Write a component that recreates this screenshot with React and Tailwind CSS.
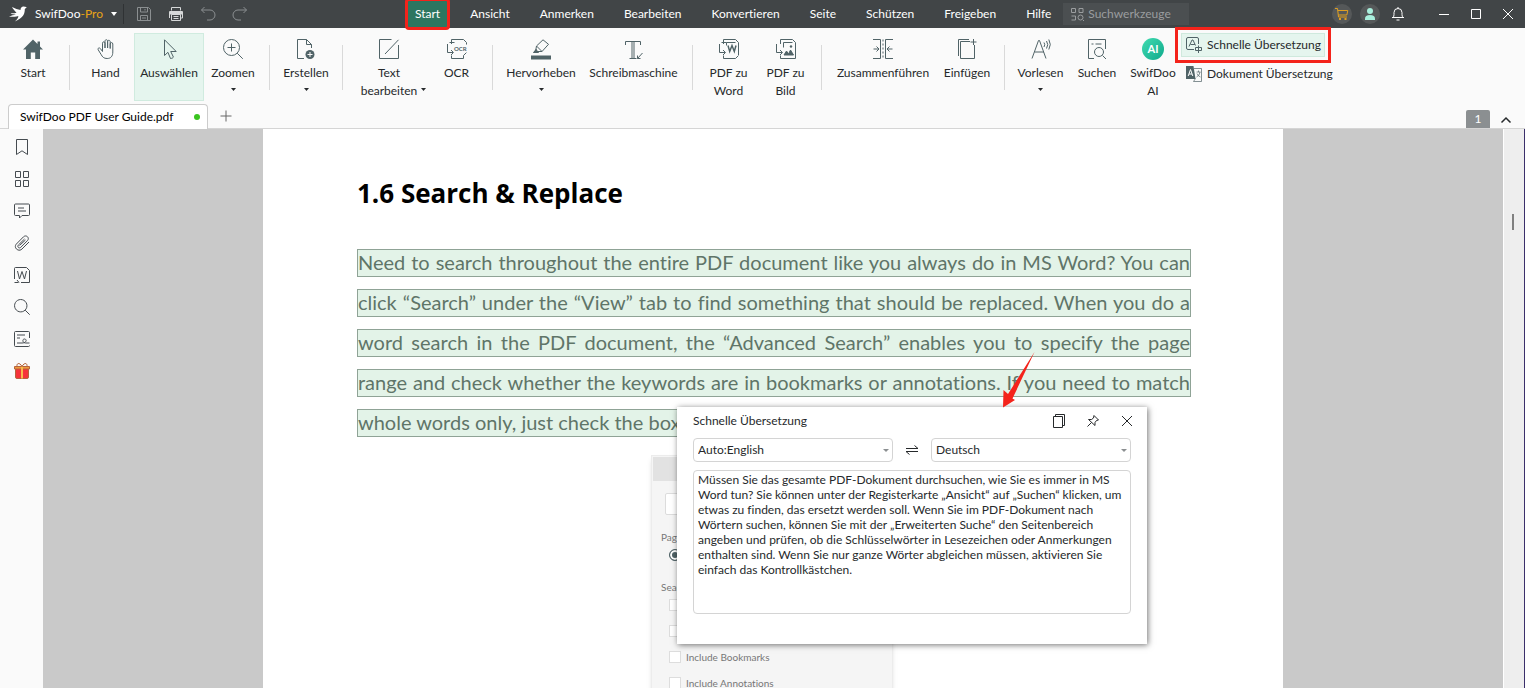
import { useState } from 'react';

const menuItems = ['Start', 'Ansicht', 'Anmerken', 'Bearbeiten', 'Konvertieren', 'Seite', 'Schützen', 'Freigeben', 'Hilfe'];

// Grupos de la cinta, separados por una línea vertical
const ribbonGroups = [
    [{ icon: 'home', label: 'Start', width: 'w-[58px]' }],
    [
        { icon: 'hand', label: 'Hand', width: 'w-[57px]' },
        { icon: 'cursor', label: 'Auswählen', width: 'w-[70px]', active: true },
        { icon: 'zoom', label: 'Zoomen', width: 'w-[58px]', caret: true }
    ],
    [{ icon: 'create', label: 'Erstellen', width: 'w-[58px]', caret: true }],
    [
        { icon: 'edit', label: 'Text', second: 'bearbeiten', width: 'w-[78px]', caret: true },
        { icon: 'ocr', label: 'OCR', width: 'w-[57px]' }
    ],
    [
        { icon: 'highlight', label: 'Hervorheben', width: 'w-[82px]', caret: true },
        { icon: 'type', label: 'Schreibmaschine', width: 'w-[103px]' }
    ],
    [
        { icon: 'word', label: 'PDF zu', second: 'Word', width: 'w-[57px]' },
        { icon: 'image', label: 'PDF zu', second: 'Bild', width: 'w-[57px]' }
    ],
    [
        { icon: 'merge', label: 'Zusammenführen', width: 'w-[108px]' },
        { icon: 'insert', label: 'Einfügen', width: 'w-[60px]' }
    ],
    [
        { icon: 'read', label: 'Vorlesen', width: 'w-[57px]', caret: true },
        { icon: 'search', label: 'Suchen', width: 'w-[56px]' },
        { icon: 'ai', label: 'SwifDoo', second: 'AI', width: 'w-[56px]' }
    ]
];

const ribbonIcons = {
    home: (
        <path d="M10 .5 0 10.500h3V20h4.800v-6.500h4.400V20H17v-9.500h3L17 7.500V2.500h-2.500v2.500z" fill="currentColor" stroke="none" />
    ),
    hand: (
        <path d="M5.500 12.500V4.200c0-1.900 2.500-1.900 2.500 0V9V2.200c0-2 2.600-2 2.600 0V9V2.800c0-2 2.600-2 2.600 0V9.500V5c0-1.900 2.600-1.900 2.600 0v8c0 4-1.800 6.500-5.600 6.500c-3.500 0-4.800-1.500-6.200-4.200L1.200 10.800c-.9-1.600 1.200-2.600 2.200-1.200l2.100 2.900" transform="translate(1 0)" />
    ),
    cursor: <path d="M5.500.8v15.700l3.400-3.200 2.600 6.200c1.800-.1 2.600-.7 2.900-1.500l-2.700-5.500h5.500z" />,
    zoom: (
        <>
            <circle cx="8.500" cy="8.500" r="8" />
            <path d="M14.200 14.200l5.600 5.600M4.500 8.500h8M8.500 4.500v8" />
        </>
    ),
    create: (
        <>
            <path d="M8 19.500H1.500V.5h9l5 5V9M10.500.5v5h5" />
            <circle cx="14" cy="15.500" r="4.500" fill="currentColor" stroke="none" />
            <path d="M11.500 15.500h5M14 13v5" stroke="#fafafa" />
        </>
    ),
    edit: <path d="M12.500.5H.5v19h19V6M6 15L19.500.8" />,
    ocr: (
        <>
            <path d="M4.500 5V.5h12l3 3v10l-3 3M.5 5v8.500H6M4 11l2.500 2.500L4 16M4.500 16.500v3h12v-3M7.500 3.500H2.500" />
            <rect x="6.500" y="5.500" width="14" height="8" rx="1" fill="#fafafa" stroke="none" />
            <text x="7" y="12" fontSize="6" fontWeight="700" fill="currentColor" stroke="none">OCR</text>
        </>
    ),
    highlight: (
        <>
            <path d="M4.500 12.500l1-5.500L12 .8l5.500 4.500-6.500 7.200zM5.500 7l5.500 5.500M3 13.500l2.500-3" />
            <path d="M2.500 13.500h5l-2.500-3z" fill="currentColor" />
            <path d="M0 16.500h20v4H0z" fill="currentColor" stroke="none" />
        </>
    ),
    type: <path d="M1.500 6V2.500h15V6M8 2.500v17M10 2.500v17M5.500 19.500h7M13.500 19.500l5-5.500M13.500 16.500v3h3" />,
    word: (
        <>
            <path d="M4.500 5V.5h12l3 3V16M.5 5v8.500H6M4 11l2.500 2.500L4 16M4.500 16.500v3h12l3-3M7.500 3.500H2.500M16.500 3.500h-9v3" />
            <path d="M9 6.500l1.700 6 2.300-6 2.300 6 1.700-6" strokeWidth="1.500" />
        </>
    ),
    image: (
        <>
            <path d="M4.500 5V.5h12l3 3V19.500h-15v-3M.5 5v8.500H6M4 11l2.500 2.500L4 16M16.500 3.500h-9v5" />
            <path d="M8 16l2.500-4 2 3 2-4 3 5z" fill="currentColor" />
            <circle cx="15" cy="7.500" r="1.200" fill="currentColor" stroke="none" />
        </>
    ),
    merge: (
        <>
            <path d="M0 .5h7.500v19H0M20 .5h-7.500v19H20M.5 10h5M3.500 7.500L6 10l-2.500 2.500M19.500 10h-5M16.500 7.500L14 10l2.500 2.500" />
            <path d="M10 .5v19" strokeDasharray="2 2" />
        </>
    ),
    insert: <path d="M13 2.500H3.500v17h14V6M1.500 17V.5h10.500M16.500 0v6M13.500 3h6" />,
    read: <path d="M1 19.500L7.500 1.500h1l6.500 18M3.500 13h9.500M13 3.500q1.500 2 0 4.500M15.500 2q2.500 3.500 0 7.500M17.800.5q3 5 0 10" />,
    search: (
        <>
            <path d="M7 19.500H1.500V.5h17V10M4.500 5h2M8.500 5h6" />
            <circle cx="12" cy="13" r="4.500" />
            <path d="M15.500 16.500l3.500 3.500" />
        </>
    )
};

const sideIcons = [
    { name: 'Lesezeichen', art: <path d="M2.500.5h11v15L8 11.800 2.500 15.500z" /> },
    { name: 'Miniaturen', art: <path d="M1.500.5h5v6h-5zM9.500.5h5v6h-5zM1.500 9.500h5v6h-5zM9.500 9.500h5v6h-5z" /> },
    { name: 'Kommentare', art: <path d="M1.500 1h13q1 0 1 1v9.500q0 1-1 1H8L5.500 15v-2.500h-4q-1 0-1-1V2q0-1 1-1zM4 5h6M4 8h8" /> },
    { name: 'Anhänge', art: <path d="M15 7l-7 7c-3.500 3.500-9-1.500-5.600-5L9.500 1.800c2.700-2.500 6.500 1 4 3.800l-6.800 6.800c-1.700 1.500-3.800-.5-2.400-2.300L10.500 4M5.500 10.500L11.500 5" /> },
    { name: 'Word', art: <path d="M.5 12V1.500Q.5.500 1.500.5h11l3 3v12H7M4.500 15.500h-4M3 13l2 2.500M3.500 4l2 8L8 4.500l2.500 7.500 2-8" /> },
    { name: 'Suche', art: <path d="M6.700.5a6.200 6.200 0 1 0 .1 0M11.200 11.200l4.500 4.500" /> },
    { name: 'Signatur', art: <path d="M15.500 7V1.500q0-1-1-1h-13q-1 0-1 1v13q0 1 1 1h13q1 0 1-1M3 4h8M3 7h3M3 12h5c5 0 5-4 2.500-4s-2 4 1 4h4" /> }
];

const pdfLines = [
    'Need to search throughout the entire PDF document like you always do in MS Word? You can',
    'click “Search” under the “View” tab to find something that should be replaced. When you do a',
    'word search in the PDF document, the “Advanced Search” enables you to specify the page',
    'range and check whether the keywords are in bookmarks or annotations. If you need to match'
];

const translation = `Müssen Sie das gesamte PDF-Dokument durchsuchen, wie Sie es immer in MS
Word tun? Sie können unter der Registerkarte „Ansicht“ auf „Suchen“ klicken, um
etwas zu finden, das ersetzt werden soll. Wenn Sie im PDF-Dokument nach
Wörtern suchen, können Sie mit der „Erweiterten Suche“ den Seitenbereich
angeben und prüfen, ob die Schlüsselwörter in Lesezeichen oder Anmerkungen
enthalten sind. Wenn Sie nur ganze Wörter abgleichen müssen, aktivieren Sie
einfach das Kontrollkästchen.`;

function Icon({ children, box = '0 0 20 20', className = 'size-5' }) {
    return (
        <svg viewBox={box} className={`shrink-0 overflow-visible ${className}`} fill="none" stroke="currentColor" strokeWidth="1" aria-hidden="true">
            {children}
        </svg>
    );
}

function Caret({ className = 'h-[3px] w-[5px]' }) {
    return (
        <svg viewBox="0 0 6 3" preserveAspectRatio="none" className={`shrink-0 ${className}`} fill="currentColor" aria-hidden="true">
            <path d="M0 0h6L3 3z" />
        </svg>
    );
}

function TitleBar() {
    return (
        <header className="flex h-7 items-center bg-[#414547] text-white">
            <div className="flex w-[407px] shrink-0 items-center">
                <Icon box="0 0 18 16" className="ml-[9px] h-4 w-[18px]">
                    <path
                        d="M17.800 1.200L15.800 3c0 4.500-1 8.500-10 12.500c2.500-2 3.700-4 3.500-5.500C6 11.500 3 10 0 11c2-1.800 5-2 7-2.300-2-.4-4-.2-5.500-1.500 2 .3 4.500 0 6-.5C5.500 4.500 4 3 3 1c3 1.500 6 2.500 8.500 3C11.500 1.500 13 .2 15 .5c1 .1 1.500.6 2.800.7z"
                        fill="white"
                        stroke="none"
                    />
                </Icon>
                <span className="ml-2 w-[68px] whitespace-nowrap">
                    SwifDoo<span className="text-[#e8a317]">-Pro</span>
                </span>
                <Caret className="ml-2 h-1 w-[6px]" />
                <span className="ml-[6px] h-5 w-px bg-[#2f3234]" />
                <div className="ml-3 flex items-center gap-4">
                    <button aria-label="Speichern" className="text-[#8b8f91]">
                        <Icon box="0 0 16 16" className="size-4">
                            <path d="M1.500 1.500h11l2 2v11h-13zM4.500 1.500V6h7V1.500M4.500 14.500V9.500h7v5M9 3v1.500M6 12h4" />
                        </Icon>
                    </button>
                    <button aria-label="Drucken" className="text-[#d6d8d9]">
                        <Icon box="0 0 16 16" className="size-4">
                            <path d="M3.500 4.500v-3h9v3M1.500 12V5.500h13V12h-2M3.500 8.500h9v6h-9zM5.500 10.500h5M5.500 12.500h5" />
                            <path d="M2 6h12v2H2z" fill="currentColor" />
                        </Icon>
                    </button>
                    <button aria-label="Rückgängig" className="text-[#8b8f91]">
                        <Icon box="0 0 16 16" className="size-4">
                            <path d="M4.500 1L1.500 4l3 3M1.500 4H10a5 5 0 0 1 0 10H7" />
                        </Icon>
                    </button>
                    <button aria-label="Wiederholen" className="text-[#8b8f91]">
                        <Icon box="0 0 16 16" className="size-4">
                            <path d="M11.500 1l3 3-3 3M14.500 4H6a5 5 0 0 0 0 10h3" />
                        </Icon>
                    </button>
                </div>
            </div>

            <nav className="flex h-full shrink-0 gap-[14px]">
                {menuItems.map((item, i) => (
                    <button
                        key={item}
                        className={
                            i === 0
                                ? 'h-7 rounded-xs bg-[#2d7660] px-2 outline-3 -outline-offset-1 outline-[#f4231b]'
                                : 'h-7 px-2'
                        }
                    >
                        {item}
                    </button>
                ))}
            </nav>

            <label className="ml-1 flex h-[22px] w-[126px] shrink-0 items-center gap-1 bg-[#4b4f51] pl-2 text-[#9a9d9f]">
                <Icon box="0 0 13 13" className="size-[13px]">
                    <path d="M.5.5h4v4h-4zM8 .5h4v4H8zM.5 8h4v4h-4M12 12l1 1" />
                    <circle cx="9.500" cy="9.500" r="2.500" />
                </Icon>
                <input aria-label="Suchwerkzeuge" placeholder="Suchwerkzeuge" className="w-24 bg-transparent outline-none placeholder:text-[#9a9d9f]" />
            </label>

            <div className="ml-auto flex items-center gap-2 pr-[5px]">
                <button aria-label="Warenkorb" className="flex size-5 items-center justify-center rounded-full bg-[#555859] text-[#e0a020]">
                    <Icon box="0 0 14 14" className="size-[14px]">
                        <path d="M0 1.500h2.500l1 8.500h8.500M2.800 3.500h10l-1 4.500h-8.500" />
                        <path d="M4 11h2v2H4zM9.500 11h2v2h-2z" fill="currentColor" stroke="none" />
                    </Icon>
                </button>
                <button aria-label="Konto" className="flex size-5 items-center justify-center rounded-full bg-[#555859] text-[#a9efdc]">
                    <Icon box="0 0 12 12" className="size-3">
                        <circle cx="6" cy="3" r="3" fill="currentColor" stroke="none" />
                        <path d="M1 12v-1.500Q1 7 6 7t5 3.500V12z" fill="currentColor" stroke="none" />
                    </Icon>
                </button>
                <button aria-label="Benachrichtigungen" className="flex size-5 items-center justify-center">
                    <Icon box="0 0 12 14" className="h-[14px] w-3">
                        <path d="M1 10.500q1-1 1-3V5.500a4 4 0 0 1 8 0v2q0 2 1 3zM0 10.500h12M4.500 13h3M6 0v1.500" />
                    </Icon>
                </button>
                <button aria-label="Minimieren" className="ml-4 flex w-6 justify-center">
                    <Icon box="0 0 10 10" className="size-[10px]"><path d="M0 5.500h10" /></Icon>
                </button>
                <button aria-label="Maximieren" className="flex w-6 justify-center">
                    <Icon box="0 0 10 10" className="size-[10px]"><path d="M.5.5h9v9h-9z" /></Icon>
                </button>
                <button aria-label="Schließen" className="flex w-6 justify-center">
                    <Icon box="0 0 10 10" className="size-[10px]"><path d="M0 0l10 10M10 0L0 10" /></Icon>
                </button>
            </div>
        </header>
    );
}

function RibbonButton({ icon, label, second, width, caret, active }) {
    return (
        <button
            className={`flex h-[68px] shrink-0 flex-col items-center border pt-1 leading-[18px] whitespace-nowrap ${width} ${active ? 'border-[#d0ebdf] bg-[#e5f5ee]' : 'border-transparent'}`}
        >
            {icon === 'ai' ? (
                <span className="flex size-[22px] items-center justify-center rounded-full bg-linear-to-br from-[#3fdcb0] to-[#08a98c] text-[11px] font-bold text-white">AI</span>
            ) : (
                <span className="flex size-[22px] items-center justify-center text-[#506367]">
                    <Icon>{ribbonIcons[icon]}</Icon>
                </span>
            )}
            <span className="mt-1">{label}</span>
            {second && (
                <span className="relative">
                    {second}
                    {caret && <Caret className="absolute top-1.5 left-full ml-1 h-[3px] w-[5px]" />}
                </span>
            )}
            {caret && !second && <Caret className="mt-1.5 h-[3px] w-[5px]" />}
        </button>
    );
}

function Ribbon() {
    return (
        <div className="flex h-[76px] items-start pt-[5px] pl-1">
            {ribbonGroups.map((group, i) => (
                <div key={i} className="flex shrink-0">
                    {i > 0 && <span className="mx-[7px] mt-3 h-[45px] w-px bg-[#d9d9d9]" />}
                    {group.map((item) => (
                        <RibbonButton key={item.icon} {...item} />
                    ))}
                </div>
            ))}
            <div className="flex shrink-0 flex-col gap-[5px]">
                <button className="flex h-6 w-[144px] items-center gap-[5px] border border-[#cfe9dd] bg-[#e5f5ee] pl-1 whitespace-nowrap outline-3 outline-offset-3 outline-[#f4231b]">
                    <Icon box="0 0 16 16" className="size-4 text-[#506367]">
                        <path d="M8 12.500H2Q.5 12.500.5 11V2Q.5.500 2 .5h9q1.500 0 1.500 1.500v5M3 9.500L6 3h1l2.500 5.500M4.500 7.500h4.500M12.500 8.500v7.500M9.500 10.500h6v3h-6z" />
                    </Icon>
                    Schnelle Übersetzung
                </button>
                <button className="flex h-6 items-center gap-[5px] pl-[5px] whitespace-nowrap">
                    <Icon box="0 0 16 16" className="size-4 text-[#506367]">
                        <path d="M8 2.500h7.500v13H7.500l2-3M10.500 6h4M12.500 4.500V6M10.500 11q3.500-2 3.500-5M11 7.500q1 2.500 3.500 3.500" strokeOpacity=".7" />
                        <path d="M0 0h7.500l2 13H0z" fill="currentColor" stroke="none" />
                        <path d="M2.200 10L4.500 3.500 6.800 10M3 8h3" stroke="white" />
                    </Icon>
                    Dokument Übersetzung
                </button>
            </div>
        </div>
    );
}

function TabRow() {
    return (
        <div className="flex h-[25px] items-end border-b border-[#d5d5d5] pl-2">
            <div className="-mb-px flex h-[25px] w-[200px] items-center justify-between rounded-t-[4px] border border-b-0 border-[#cccccc] bg-white pr-[7px] pl-[11px] text-black">
                SwifDoo PDF User Guide.pdf
                <span className="size-[6px] rounded-full bg-[#3ac51f]" />
            </div>
            <button aria-label="Neuer Tab" className="flex h-6 w-9 items-center justify-center text-[#666666]">
                <Icon box="0 0 12 12" className="size-3"><path d="M6 .5v11M.5 6h11" /></Icon>
            </button>
            <div className="ml-auto flex items-end gap-2 pr-[11px]">
                <span className="flex h-[18px] w-6 items-center justify-center rounded-t-xs bg-[#8b8f91] text-white">1</span>
                <button aria-label="Menüband einklappen" className="flex size-4 items-center justify-center">
                    <Icon box="0 0 10 6" className="h-[6px] w-[10px]"><path d="M.5 5.500L5 1l4.500 4.500" strokeWidth="1.500" /></Icon>
                </button>
            </div>
        </div>
    );
}

function SideBar() {
    return (
        <aside className="flex w-[43px] shrink-0 flex-col items-end gap-4 bg-[#fafafa] pt-[10px] pr-[13px] text-[#454b50]">
            {sideIcons.map((item) => (
                <button key={item.name} aria-label={item.name} className="size-4">
                    <Icon box="0 0 16 16" className="size-4">{item.art}</Icon>
                </button>
            ))}
            <button aria-label="Geschenk" className="size-4">
                <Icon box="0 0 16 16" className="size-4">
                    <path d="M1.500 5.500h13V14q0 1.500-1.500 1.500H3q-1.500 0-1.500-1.500z" fill="#f5333a" stroke="#b5643c" />
                    <path d="M.5 3.500h15v2.500H.5z" fill="#f0993e" stroke="#b5643c" />
                    <path d="M7 3.500h2v12H7z" fill="#f7b84b" stroke="none" />
                    <path d="M8 3.500C6-.5 2.500-.5 3 3.500M8 3.500c2-4 5.500-4 5 0" stroke="#b5643c" />
                </Icon>
            </button>
        </aside>
    );
}

// Ventana de búsqueda que aparece dentro del documento PDF
function FigureDialog() {
    return (
        <div className="ml-[294px] w-[242px] border border-[#ececec] bg-[#f5f5f5] p-px pb-4 text-[10px] leading-4 text-[#777777] shadow-md">
            <div className="h-6 bg-[#e2e2e2]" />
            <div className="mt-3 ml-3 h-[22px] w-52 rounded-xs border border-[#dcdcdc] bg-white" />
            <p className="mt-[14px] pl-2">Page</p>
            <input type="radio" name="range" aria-label="Page" defaultChecked className="mt-1 ml-4 block size-3 appearance-none rounded-full border border-[#506367] bg-[#506367] shadow-[inset_0_0_0_2px_white]" />
            <p className="mt-[18px] pl-2">Search</p>
            <div className="mt-0.5 flex flex-col gap-[10px] pl-4">
                {['', '', 'Include Bookmarks', 'Include Annotations'].map((label, i) => (
                    <label key={i} className="flex h-4 items-center gap-[5px]">
                        <input type="checkbox" aria-label={label || 'Option'} className="size-3 appearance-none border border-[#dddddd] bg-white" />
                        {label}
                    </label>
                ))}
            </div>
        </div>
    );
}

function LanguageSelect({ label, value, options }) {
    const [language, setLanguage] = useState(value);

    return (
        <div className="relative w-[200px]">
            <select
                aria-label={label}
                value={language}
                onChange={(e) => setLanguage(e.target.value)}
                className="h-6 w-full appearance-none rounded-[4px] border border-[#d4d4d4] bg-white pl-1 outline-none"
            >
                {options.map((option) => (
                    <option key={option}>{option}</option>
                ))}
            </select>
            <Caret className="absolute top-[11px] right-1 h-[3px] w-[6px] text-[#8b8f91]" />
        </div>
    );
}

function TranslationPopup() {
    return (
        <section className="absolute top-[278px] left-[414px] flex w-[470px] flex-col bg-white px-4 pb-[30px] shadow-[1px_1px_6px_rgba(0,0,0,0.55)]">
            <div className="flex h-[31px] items-center pb-1">
                <h2>Schnelle Übersetzung</h2>
                <div className="-mr-0.5 ml-auto flex gap-[22px]">
                    <button aria-label="Kopieren" className="size-3">
                        <Icon box="0 0 12 14" className="-mt-px h-[14px] w-3"><path d="M.5 2.500h9v11h-9zM2.500 2.500v-2h9v11h-2" /></Icon>
                    </button>
                    <button aria-label="Anheften" className="size-3">
                        <Icon box="0 0 12 12" className="size-3"><path d="M7 .5l4.500 4.500-2 .5-1.500 2v3L1.500 4.500h3l2-1.500zM4.500 7.500L.5 11.500" /></Icon>
                    </button>
                    <button aria-label="Schließen" className="flex size-3 items-center justify-center">
                        <Icon box="0 0 10 10" className="size-[10px]"><path d="M0 0l10 10M10 0L0 10" /></Icon>
                    </button>
                </div>
            </div>
            <div className="flex items-center justify-between">
                <LanguageSelect label="Ausgangssprache" value="Auto:English" options={['Auto:English', 'Deutsch']} />
                <Icon box="0 0 12 10" className="h-[10px] w-3"><path d="M0 3.500h12L8.500.5M12 6.500H0l3.500 3" /></Icon>
                <LanguageSelect label="Zielsprache" value="Deutsch" options={['Deutsch', 'English']} />
            </div>
            <textarea
                aria-label="Übersetzter Text"
                defaultValue={translation}
                className="mt-2 h-36 w-full resize-none overflow-hidden rounded-[4px] border border-[#d4d4d4] px-1 py-px leading-[15px] whitespace-pre outline-none"
            />
        </section>
    );
}

export default function App() {
    return (
        <div className="flex h-screen flex-col overflow-hidden bg-[#fafafa] font-[Lato,sans-serif] text-[12px] text-[#26292b] [font-variant-ligatures:none]">
            <TitleBar />
            <Ribbon />
            <TabRow />

            <div className="flex min-h-0 flex-1">
                <SideBar />
                <main className="flex min-w-0 flex-1 justify-center overflow-hidden bg-[#c9c9c9]">
                    <article className="relative w-[1020px] shrink-0 bg-white pt-[42px] pr-[92px] pl-[94px]">
                        <h1 className="h-11 font-['Open_Sans',sans-serif] text-[26px] leading-[44px] font-bold text-black">1.6 Search & Replace</h1>
                        <div className="mt-[34px] mb-[18px] flex flex-col gap-3 text-[20px] leading-6 whitespace-nowrap text-[#5f7568]">
                            {pdfLines.map((line) => (
                                <p key={line} className="h-7 border border-[#8fa396] bg-[#e3f3e8] [text-align-last:justify]">{line}</p>
                            ))}
                            <p className="h-7 w-[340px] border border-[#8fa396] bg-[#e3f3e8]">whole words only, just check the box</p>
                        </div>
                        <FigureDialog />

                        <TranslationPopup />
                        <svg viewBox="0 0 34 56" className="absolute top-[223px] left-[739px] h-14 w-[34px]" fill="#f4231b" aria-hidden="true">
                            <path d="M32.500 0L6 42 1.500 38 1 55.500 13 48 10.500 46.500z" />
                        </svg>
                    </article>
                </main>
                <div className="flex w-[22px] shrink-0 border-x border-r-[#3b2f6b] border-l-white bg-[#eeeeee] pt-[85px] pl-2">
                    <span className="h-4 w-0.5 bg-[#808080]" />
                </div>
            </div>
        </div>
    );
}
